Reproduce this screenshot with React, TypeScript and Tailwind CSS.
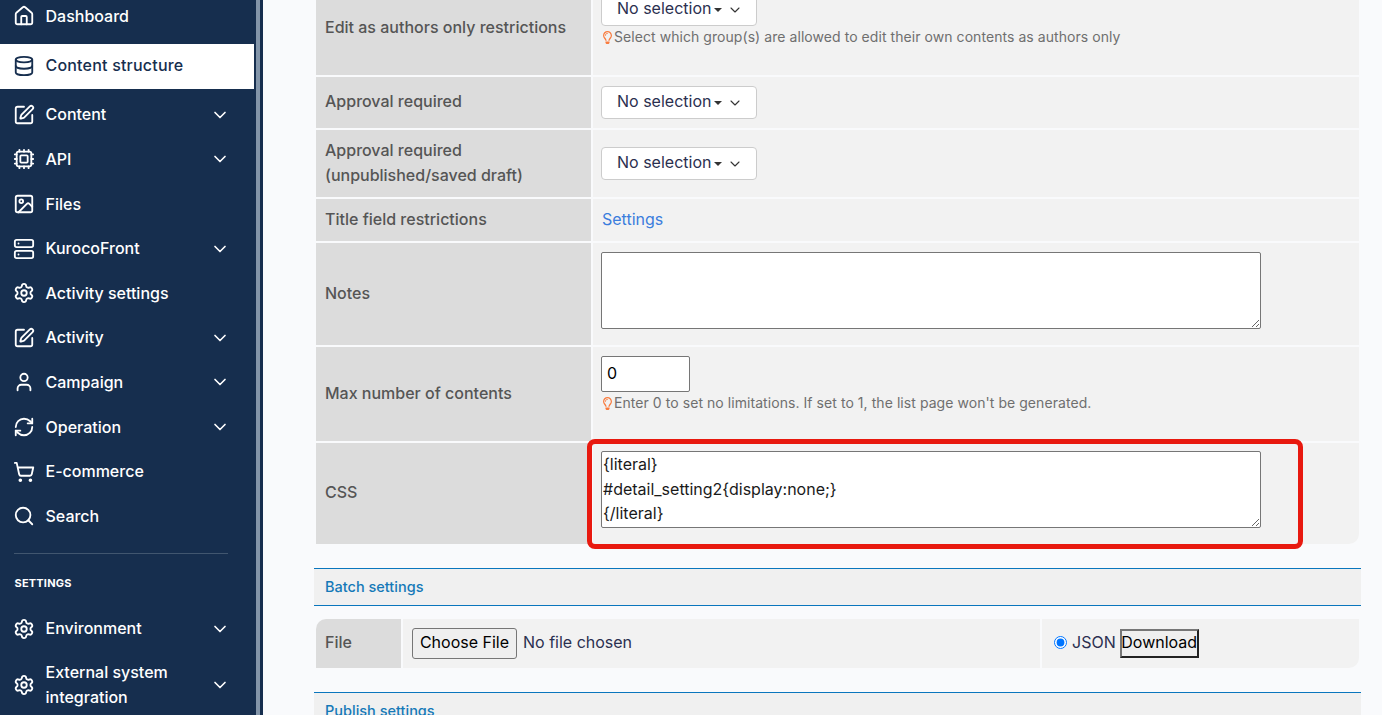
import { ChevronDown, Cpu, Database, House, Image, RefreshCw, Search, Server, Settings, ShoppingCart, SquarePen, User } from 'lucide-react';
import { FaRegLightbulb } from 'react-icons/fa';
import type { ReactNode } from 'react';

const navTop = [
  { label: 'Content', icon: SquarePen, more: true },
  { label: 'API', icon: Cpu, more: true },
  { label: 'Files', icon: Image },
  { label: 'KurocoFront', icon: Server, more: true },
  { label: 'Activity settings', icon: Settings },
  { label: 'Activity', icon: SquarePen, more: true },
  { label: 'Campaign', icon: User, more: true },
  { label: 'Operation', icon: RefreshCw, more: true },
  { label: 'E-commerce', icon: ShoppingCart },
  { label: 'Search', icon: Search },
];

function NavItem({ label, icon: Icon, more }: { label: string; icon: typeof User; more?: boolean }) {
  return (
    <div className="flex h-[44.6px] items-center pl-[13px] pr-[24px] text-white">
      <Icon size={22} strokeWidth={2} className="shrink-0" />
      <span className="ml-[10.5px] flex-1 leading-[25px]">{label}</span>
      {more && <ChevronDown size={20} strokeWidth={2} />}
    </div>
  );
}

function Sidebar() {
  return (
    <aside className="relative h-[715px] w-[263px] shrink-0 overflow-hidden bg-[#162e4e] font-medium">
      <div className="mt-[-6px] w-[254px]">
        <NavItem label="Dashboard" icon={House} />
        <div className="mb-[4px] mt-[5px] flex h-[45px] items-center bg-white pl-[13px] text-[#162e4e]">
          <Database size={22} strokeWidth={2} className="shrink-0" />
          <span className="ml-[10.5px] pb-[2px] tracking-[0.2px]">Content structure</span>
        </div>
        {navTop.map((item) => (
          <NavItem key={item.label} {...item} />
        ))}
        <div className="ml-[14px] mr-[26px] mt-[14px] border-t border-[#41566f]" />
        <div className="mt-[21px] pl-[14.5px] text-[11px] font-bold leading-[16px] tracking-[0.2px] text-white">SETTINGS</div>
        <div className="mt-[16px]">
          <NavItem label="Environment" icon={Settings} more />
        </div>
        <div className="mt-[9px] flex items-center pl-[13px] pr-[24px] text-white">
          <Settings size={22} strokeWidth={2} className="shrink-0" />
          <span className="ml-[10.5px] flex-1 leading-[25px]">
            External system
            <br />
            integration
          </span>
          <ChevronDown size={20} strokeWidth={2} />
        </div>
      </div>
      <div className="absolute left-[256px] top-0 h-full w-[4px] bg-[#8395a9]" />
    </aside>
  );
}

function Row({ label, h, children, center = true, last }: { label: ReactNode; h: string; children: ReactNode; center?: boolean; last?: boolean }) {
  return (
    <div className={`relative flex ${h} gap-[2px]`}>
      <div className="flex w-[275px] shrink-0 items-center bg-[#dcdcdc] pb-[2px] pl-[9px] font-medium leading-[25px] text-[#555555]">{label}</div>
      <div className={`flex flex-1 flex-col bg-[#f2f2f2] pl-[8px] ${center ? 'justify-center' : ''} ${last ? 'rounded-br-[10px]' : ''}`}>{children}</div>
    </div>
  );
}

function SelectBox() {
  return (
    <div className="flex h-[33px] w-[156px] items-center rounded-[4px] border border-[#cccccc] bg-white pb-[4px] pl-[15px] text-[#2b3050]">
      <span>No selection</span>
      <span className="ml-[3px] mt-[4px] h-0 w-0 border-x-[4px] border-t-[4px] border-x-transparent border-t-[#333333]" />
      <ChevronDown size={16} strokeWidth={1.6} className="ml-[5px] mt-[4px] text-[#333333]" />
    </div>
  );
}

function Hint({ children }: { children: ReactNode }) {
  return (
    <div className="mt-[2px] flex h-[18px] items-center text-[14px] tracking-[0.06px] text-[#6f6f6f]">
      <FaRegLightbulb size={13} className="shrink-0 text-[#f97b3e]" />
      <span className="pb-[1px]">{children}</span>
    </div>
  );
}

function SectionHead({ title }: { title: string }) {
  return (
    <div className="flex h-[38px] items-center border-y border-[#0a76bd] bg-[#f0f0f0] pl-[11px] text-[14.5px] font-medium text-[#1579b8]">{title}</div>
  );
}

export default function App() {
  return (
    <div className="flex h-[715px] w-[1382px] overflow-hidden bg-[#f9fafc] font-['Inter',sans-serif] text-base">
      <Sidebar />
      <main className="ml-[51px] w-[1047px] shrink-0">
        <div className="ml-[2px] mt-[-19px] w-[1043px]">
          <div className="flex flex-col gap-[2px]">
            <Row label="Edit as authors only restrictions" h="h-[94px]" center={false}>
              <div className="mt-[12px]">
                <SelectBox />
              </div>
              <Hint>Select which group(s) are allowed to edit their own contents as authors only</Hint>
            </Row>
            <Row label="Approval required" h="h-[51px]">
              <SelectBox />
            </Row>
            <Row label={<span>Approval required<br />(unpublished/saved draft)</span>} h="h-[67px]">
              <SelectBox />
            </Row>
            <Row label="Title field restrictions" h="h-[42px]">
              <span className="ml-[1px] pb-[2px] text-[#3b7ddd]">Settings</span>
            </Row>
            <Row label="Notes" h="h-[102px]" center={false}>
              <textarea readOnly value="" className="mt-[9px] block h-[77px] w-[660px] rounded-[2px] border border-[#767676] bg-white" />
            </Row>
            <Row label="Max number of contents" h="h-[94px]" center={false}>
              <input readOnly value="0" className="mt-[9px] h-[36px] w-[89px] rounded-[2px] border border-[#767676] bg-white px-[5px] pb-[2px] text-black" />
              <Hint>Enter 0 to set no limitations. If set to 1, the list page won't be generated.</Hint>
            </Row>
            <Row label="CSS" h="h-[101px]" center={false} last>
              <textarea
                readOnly
                value={'{literal}\n#detail_setting2{display:none;}\n{/literal}'}
                className="mt-[8px] block h-[77px] w-[660px] rounded-[2px] border border-[#767676] bg-white px-[1px] leading-[24.5px] text-[#1a1a1a]"
              />
              <div className="absolute left-[271px] top-[-4px] h-[110px] w-[716px] rounded-[8px] border-[5px] border-[#e8190f]" />
            </Row>
          </div>
        </div>
        <div className="mt-[24px]">
          <SectionHead title="Batch settings" />
        </div>
        <div className="ml-[2px] mt-[13px] flex h-[49px] w-[1043px] gap-[2px]">
          <div className="flex w-[85px] items-center rounded-tl-[10px] bg-[#dcdcdc] pb-[3px] pl-[9px] font-medium text-[#555555]">File</div>
          <div className="flex w-[637px] items-center bg-[#f2f2f2] pl-[9px] text-[#2b3050]">
            <span className="flex h-[31px] w-[105px] items-center justify-center rounded-[3px] border border-[#767676] bg-[#efefef] pb-[3px] text-black">Choose File</span>
            <span className="ml-[6px] pb-[3px]">No file chosen</span>
          </div>
          <div className="flex flex-1 items-center rounded-br-[10px] bg-[#f2f2f2] pl-[12px] text-[#2b3050]">
            <input type="radio" readOnly checked className="mb-[3px] h-[13px] w-[13px] accent-[#0075ff]" />
            <span className="ml-[5px] pb-[3px]">JSON</span>
            <span className="ml-[4px] flex h-[29px] w-[79px] items-center justify-center border-2 border-b-[#222222] border-l-[#767676] border-r-[#222222] border-t-[#767676] bg-[#efefef] pb-[3px] text-black">Download</span>
          </div>
        </div>
        <div className="mt-[24px]">
          <SectionHead title="Publish settings" />
        </div>
      </main>
    </div>
  );
}
